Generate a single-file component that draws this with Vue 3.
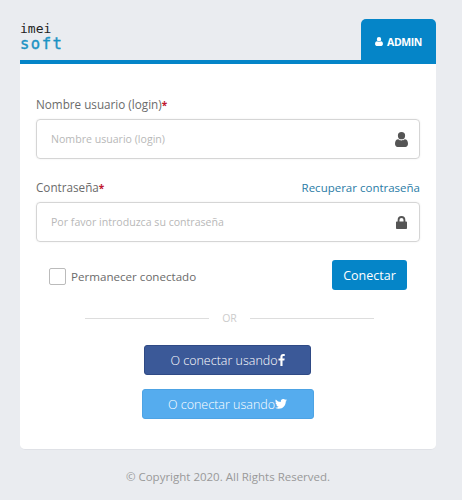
<template>
  <div class="page">
    <header class="top">
      <div class="logo">
        <span class="logo-imei">imei</span>
        <span class="logo-soft">soft</span>
      </div>
      <div class="tab">
        <svg class="tab-icon" viewBox="0 0 14 16"><path :d="userPath" /></svg>
        <span>ADMIN</span>
      </div>
    </header>

    <main class="card">
      <div class="field">
        <div class="label-row">
          <label>Nombre usuario (login)<em>*</em></label>
        </div>
        <div class="input-box">
          <input type="text" placeholder="Nombre usuario (login)" />
          <svg class="input-icon" viewBox="0 0 14 16"><path :d="userPath" /></svg>
        </div>
      </div>

      <div class="field second">
        <div class="label-row">
          <label>Contraseña<em>*</em></label>
          <a href="#">Recuperar contraseña</a>
        </div>
        <div class="input-box">
          <input type="password" placeholder="Por favor introduzca su contraseña" />
          <svg class="input-icon lock" viewBox="0 0 12 14">
            <path d="M1.800 5.800V4.200a4.200 4.200 0 0 1 8.400 0v1.600h.7c.6 0 1.100.5 1.100 1.100v6c0 .6-.5 1.100-1.100 1.100H1.100C.5 14 0 13.500 0 12.900v-6c0-.6.5-1.100 1.100-1.100h.7zm2 0h4.400V4.200a2.200 2.200 0 0 0-4.400 0v1.600z" />
          </svg>
        </div>
      </div>

      <div class="actions">
        <label class="remember">
          <span class="check"></span>
          Permanecer conectado
        </label>
        <button class="connect">Conectar</button>
      </div>

      <div class="divider"><span>OR</span></div>

      <div class="social">
        <button class="fb">
          O conectar usando<svg class="fb-icon" viewBox="0 0 8 14"><path d="M5.200 14V7.700h2.100l.4-2.500H5.200V3.600c0-.7.2-1.200 1.200-1.200h1.400V.1C7.500.1 6.800 0 5.900 0 4 0 2.700 1.200 2.700 3.300v1.900H.5v2.500h2.200V14z" /></svg>
        </button>
        <button class="tw">
          O conectar usando<svg class="tw-icon" viewBox="0 0 24 20"><path d="M24 2.400a9.800 9.800 0 0 1-2.800.8A5 5 0 0 0 23.300.5a9.800 9.800 0 0 1-3.100 1.200 4.900 4.900 0 0 0-8.400 4.500A14 14 0 0 1 1.700.9a4.900 4.900 0 0 0 1.500 6.600 4.900 4.900 0 0 1-2.200-.6c0 2.400 1.700 4.400 3.900 4.900a4.900 4.900 0 0 1-2.200.1 4.900 4.900 0 0 0 4.600 3.400A9.900 9.900 0 0 1 0 17.300 14 14 0 0 0 7.500 19.500c9.100 0 14.300-7.700 14-14.600A10 10 0 0 0 24 2.400z" /></svg>
        </button>
      </div>
    </main>

    <footer class="copy">© Copyright 2020. All Rights Reserved.</footer>
  </div>
</template>

<script setup>
// same silhouette for the tab and for the login field
const userPath =
  'M7 0a3.900 3.900 0 0 1 3.900 3.900A3.900 3.900 0 0 1 7 7.800a3.900 3.900 0 0 1-3.900-3.900A3.900 3.900 0 0 1 7 0zM3.600 7.700C4.500 8.500 5.700 9 7 9s2.500-.5 3.400-1.300C12.800 7.800 14 9.700 14 12.600c0 1.900-1.200 3.400-2.800 3.400H2.800C1.200 16 0 14.500 0 12.600 0 9.700 1.200 7.800 3.600 7.700z'
</script>

<style>
html,
body {
  margin: 0;
  background: #eaecf0;
}
</style>

<style scoped>
.page {
  width: 462px;
  height: 500px;
  box-sizing: border-box;
  padding: 19px 26px 0 20px;
  font-family: 'Open Sans', 'Noto Sans', sans-serif;
  color: #6b6b6b;
  overflow: hidden;
}
.top {
  display: flex;
  justify-content: space-between;
  border-bottom: 4px solid #0585c8;
  height: 41px;
}
.logo {
  display: flex;
  flex-direction: column;
  line-height: 1;
}
.logo-imei {
  font-family: 'DejaVu Sans Mono', monospace;
  font-size: 13px;
  color: #222;
  height: 15px;
  padding-top: 3px;
}
.logo-soft {
  font-family: 'DejaVu Sans Mono', monospace;
  font-size: 15.500px;
  letter-spacing: 1.500px;
  color: #1b93c4;
  -webkit-text-stroke: 0.4px #1b93c4;
}
.tab {
  width: 75px;
  height: 45px;
  background: #0585c8;
  border-radius: 5px 5px 0 0;
  color: #fff;
  font-size: 10.500px;
  font-weight: 700;
  letter-spacing: -0.400px;
  display: flex;
  align-items: center;
  justify-content: center;
  gap: 4px;
}
.tab-icon {
  width: 8px;
  height: 9px;
  fill: #fff;
}
.card {
  height: 386px;
  box-sizing: border-box;
  background: #fff;
  border-radius: 0 0 5px 5px;
  border-bottom: 1px solid #dfe1e6;
  padding: 31px 16px 0;
}
.label-row {
  display: flex;
  justify-content: space-between;
  align-items: center;
  height: 18px;
  margin-bottom: 6px;
  font-size: 11.700px;
}
.label-row em {
  color: #c0182f;
  font-style: normal;
  font-size: 10px;
  font-weight: 700;
}
.label-row a {
  color: #2a7ca6;
  font-size: 11.500px;
  text-decoration: none;
}
.second {
  margin-top: 19px;
}
.input-box {
  position: relative;
  height: 40px;
  box-sizing: border-box;
  border: 1px solid #d5d5d5;
  border-radius: 4px;
  box-shadow: 0 0 2px rgba(0, 0, 0, 0.08);
}
.input-box input {
  width: 100%;
  height: 100%;
  box-sizing: border-box;
  border: 0;
  outline: 0;
  background: transparent;
  padding: 0 40px 0 14px;
  font-family: inherit;
  font-size: 10.600px;
}
.input-box input::placeholder {
  color: #b8b8b8;
  opacity: 1;
}
.input-icon {
  position: absolute;
  right: 11px;
  top: 12px;
  width: 13px;
  height: 15px;
  fill: #555;
}
.input-icon.lock {
  width: 11px;
  height: 13px;
  right: 12px;
  top: 13px;
}
.actions {
  display: flex;
  justify-content: space-between;
  align-items: center;
  margin-top: 18px;
  padding: 0 13px;
  height: 30px;
}
.remember {
  display: flex;
  align-items: center;
  gap: 5px;
  padding-top: 3px;
  font-size: 11.600px;
  color: #6b6b6b;
}
.check {
  width: 15px;
  height: 15px;
  border: 1px solid #bbb;
  border-radius: 2px;
}
.connect {
  width: 75px;
  height: 30px;
  border: 0;
  border-radius: 3px;
  background: #0585c8;
  color: #fff;
  font-family: inherit;
  font-size: 12.500px;
  padding: 0;
}
.divider {
  display: flex;
  align-items: center;
  gap: 13px;
  margin: 21px 46px 0 49px;
  font-size: 10.500px;
  color: #ccc;
}
.divider::before,
.divider::after {
  content: '';
  flex: 1;
  height: 1px;
  background: #ddd;
}
.social {
  display: flex;
  flex-direction: column;
  align-items: center;
  gap: 14px;
  margin-top: 20px;
  padding-right: 1px;
}
.social button {
  height: 30px;
  box-sizing: border-box;
  border-radius: 3px;
  color: #fff;
  font-family: inherit;
  font-size: 12.500px;
  font-weight: 300;
  padding: 0;
  display: flex;
  align-items: center;
  justify-content: center;
}
.fb {
  width: 167px;
  background: #3b5998;
  border: 1px solid #2f4a85;
}
.tw {
  width: 172px;
  background: #55acee;
  border: 1px solid #4da3e4;
}
.fb-icon {
  width: 7px;
  height: 12px;
  fill: #fff;
}
.tw-icon {
  width: 12px;
  height: 10px;
  fill: #fff;
}
.copy {
  margin-top: 19px;
  text-align: center;
  font-size: 11.500px;
  color: #999;
  line-height: 16px;
}
</style>
